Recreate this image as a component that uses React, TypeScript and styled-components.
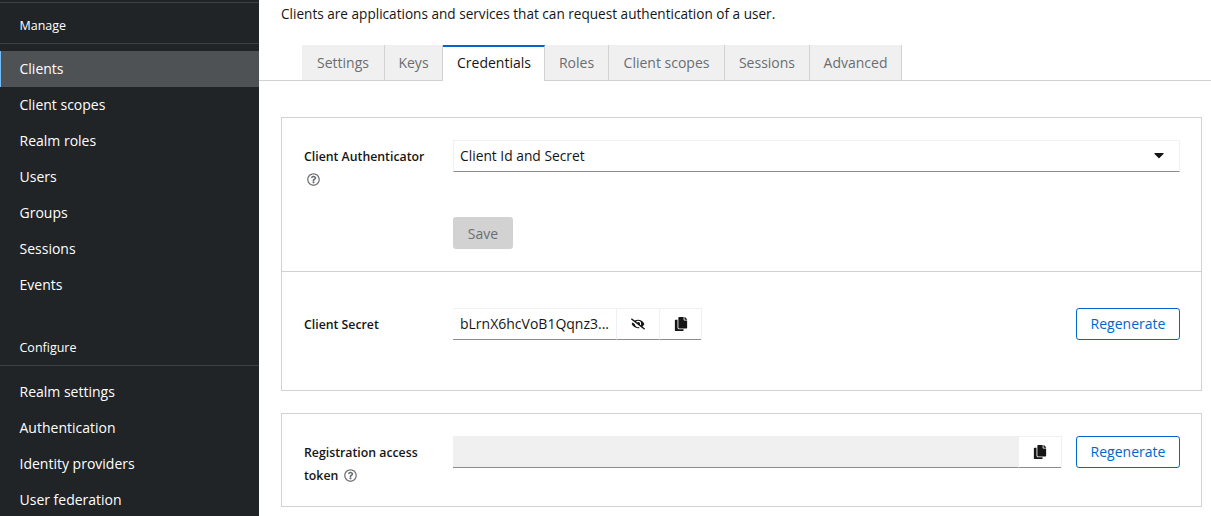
import React from "react";
import styled, { createGlobalStyle } from "styled-components";
import { FaCaretDown, FaCopy, FaEyeSlash, FaRegQuestionCircle } from "react-icons/fa";

const FONT = `"Open Sans", "Liberation Sans", sans-serif`;

const GlobalStyle = createGlobalStyle`
  html, body {
    margin: 0;
    height: 516px;
    overflow: hidden;
    background: #fff;
  }
  * { box-sizing: border-box; }
`;

const Page = styled.div`
  display: flex;
  width: 1211px;
  height: 516px;
  overflow: hidden;
  font-family: ${FONT};
  font-size: 14px;
  color: #151515;
`;

// Barre latérale
const Sidebar = styled.nav`
  width: 259px;
  flex: none;
  background: #212427;
  color: #fff;
  padding-top: 2px;
`;

const TopLine = styled.div`
  height: 1px;
  background: #3c3f42;
`;

const GroupTitle = styled.div<{ $first?: boolean }>`
  margin-top: ${({ $first }) => ($first ? "0" : "34px")};
  padding: ${({ $first }) => ($first ? "12px" : "0")} 19.5px 7px;
  height: ${({ $first }) => ($first ? "41px" : "29px")};
  line-height: 21px;
  font-size: 12.5px;
  border-bottom: 1px solid #3c3f42;
`;

const NavList = styled.div<{ $top: number }>`
  margin-top: ${({ $top }) => $top}px;
`;

const NavItem = styled.div<{ $active?: boolean }>`
  height: 36px;
  line-height: 36px;
  padding-left: ${({ $active }) => ($active ? "18.5px" : "19.5px")};
  background: ${({ $active }) => ($active ? "#4f5255" : "transparent")};
  border-left: ${({ $active }) => ($active ? "1px solid #73bcf7" : "0")};
`;

// Zone principale
const Main = styled.main`
  flex: 1;
  min-width: 0;
`;

const Description = styled.p`
  margin: 0;
  height: 45px;
  padding: 4px 0 0 22px;
  line-height: 20px;
  font-size: 13.6px;
`;

const TabBar = styled.div`
  display: flex;
  height: 36px;
  padding-left: 43px;
  border-bottom: 1px solid #d2d2d2;
`;

const Tab = styled.div<{ $width: number; $active?: boolean }>`
  width: ${({ $width }) => $width}px;
  height: ${({ $active }) => ($active ? "36px" : "35px")};
  line-height: ${({ $active }) => ($active ? "32px" : "35px")};
  padding-left: ${({ $active }) => ($active ? "1px" : "0")};
  text-align: center;
  color: ${({ $active }) => ($active ? "#151515" : "#6a6e73")};
  background: ${({ $active }) => ($active ? "#fff" : "#f0f0f0")};
  border-right: 1px solid #d2d2d2;
  border-top: ${({ $active }) => ($active ? "2px solid #06c" : "0")};
`;

const Content = styled.div`
  padding: 36px 9px 0 22px;
`;

const Card = styled.section`
  border: 1px solid #d2d2d2;
  margin-bottom: 22px;
`;

const Section = styled.div<{ $height: number; $top: number; $divided?: boolean }>`
  height: ${({ $height }) => $height}px;
  padding: ${({ $top }) => $top}px 21px 0 22px;
  border-bottom: ${({ $divided }) => ($divided ? "1px solid #d2d2d2" : "0")};
`;

const Row = styled.div`
  display: flex;
  align-items: flex-start;
`;

const Label = styled.div`
  width: 149px;
  flex: none;
  font-weight: 600;
  font-size: 12.3px;
  line-height: 22.5px;
  padding-top: 6px;
`;

const HelpIcon = styled(FaRegQuestionCircle)<{ $inline?: boolean }>`
  width: 13px;
  height: 13px;
  color: #6a6e73;
  display: ${({ $inline }) => ($inline ? "inline-block" : "block")};
  margin: ${({ $inline }) => ($inline ? "0 0 -2px 6px" : "4px 0 0 3px")};
`;

const Select = styled.div`
  flex: 1;
  height: 32px;
  display: flex;
  align-items: center;
  justify-content: space-between;
  padding: 0 12px 2px 6px;
  border: 1px solid #f0f0f0;
  border-bottom-color: #8a8d90;
  font-size: 13.8px;
`;

const Caret = styled(FaCaretDown)`
  width: 16px;
  height: 16px;
  color: #151515;
`;

const SaveButton = styled.button`
  display: block;
  margin: 31px 0 0 149px;
  width: 60px;
  height: 32px;
  padding: 1px 0 0;
  border: 0;
  border-radius: 3px;
  background: #d2d2d2;
  color: #6a6e73;
  font: 400 14px ${FONT};
`;

const InputGroup = styled.div<{ $width: number }>`
  display: flex;
  width: ${({ $width }) => $width}px;
  height: 32px;
  flex: none;
  border-right: 1px solid #f0f0f0;
`;

const SecretText = styled.div`
  width: 164px;
  height: 32px;
  line-height: 30px;
  padding-left: 7px;
  border-top: 1px solid #f0f0f0;
  border-bottom: 1px solid #8a8d90;
  font-size: 14px;
  white-space: nowrap;
`;

const DisabledInput = styled.div`
  flex: 1;
  height: 32px;
  background: #f0f0f0;
  border-bottom: 1px solid #8a8d90;
`;

const IconButton = styled.div<{ $width: number }>`
  width: ${({ $width }) => $width}px;
  height: 32px;
  flex: none;
  display: flex;
  align-items: center;
  justify-content: center;
  border-top: 1px solid #f0f0f0;
  border-left: 1px solid #f0f0f0;
  border-bottom: 1px solid #8a8d90;
  color: #151515;
  svg { width: 14px; height: 14px; }
`;

const Regenerate = styled.button`
  margin-left: auto;
  width: 104px;
  height: 32px;
  flex: none;
  padding: 0 0 2px;
  border: 1px solid #06c;
  border-radius: 3px;
  background: #fff;
  color: #06c;
  font: 400 14px ${FONT};
`;

const sideManage = ["Clients", "Client scopes", "Realm roles", "Users", "Groups", "Sessions", "Events"];
const sideConfigure = ["Realm settings", "Authentication", "Identity providers", "User federation"];
const tabs = [
  { name: "Settings", width: 83 },
  { name: "Keys", width: 58 },
  { name: "Credentials", width: 102, active: true },
  { name: "Roles", width: 64 },
  { name: "Client scopes", width: 116 },
  { name: "Sessions", width: 85 },
  { name: "Advanced", width: 92 },
];

export default function App() {
  return (
    <Page>
      <GlobalStyle />
      <Sidebar>
        <TopLine />
        <GroupTitle $first>Manage</GroupTitle>
        <NavList $top={7}>
          {sideManage.map((item) => (
            <NavItem key={item} $active={item === "Clients"}>
              {item}
            </NavItem>
          ))}
        </NavList>
        <GroupTitle>Configure</GroupTitle>
        <NavList $top={8}>
          {sideConfigure.map((item) => (
            <NavItem key={item}>{item}</NavItem>
          ))}
        </NavList>
      </Sidebar>
      <Main>
        <Description>Clients are applications and services that can request authentication of a user.</Description>
        <TabBar>
          {tabs.map((tab) => (
            <Tab key={tab.name} $width={tab.width} $active={tab.active}>
              {tab.name}
            </Tab>
          ))}
        </TabBar>
        <Content>
          <Card>
            <Section $height={154} $top={22} $divided>
              <Row>
                <Label>
                  Client Authenticator
                  <HelpIcon />
                </Label>
                <Select>
                  Client Id and Secret
                  <Caret />
                </Select>
              </Row>
              <SaveButton>Save</SaveButton>
            </Section>
            <Section $height={118} $top={36}>
              <Row>
                <Label>Client Secret</Label>
                <InputGroup $width={249}>
                  <SecretText>bLrnX6hcVoB1Qqnz3...</SecretText>
                  <IconButton $width={43}>
                    <FaEyeSlash />
                  </IconButton>
                  <IconButton $width={42}>
                    <FaCopy />
                  </IconButton>
                </InputGroup>
                <Regenerate>Regenerate</Regenerate>
              </Row>
            </Section>
          </Card>
          <Card>
            <Section $height={92} $top={22}>
              <Row>
                <Label>
                  Registration access token
                  <HelpIcon $inline />
                </Label>
                <InputGroup $width={609}>
                  <DisabledInput />
                  <IconButton $width={43}>
                    <FaCopy />
                  </IconButton>
                </InputGroup>
                <Regenerate>Regenerate</Regenerate>
              </Row>
            </Section>
          </Card>
        </Content>
      </Main>
    </Page>
  );
}
